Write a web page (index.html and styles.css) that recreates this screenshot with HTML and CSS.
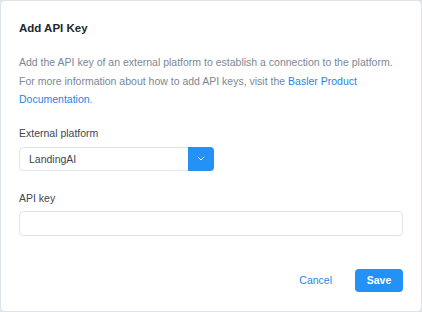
FILE: index.html
```html
<!DOCTYPE html>
<html>
<head>
<meta charset="utf-8">
<link rel="stylesheet" href="styles.css">
</head>
<body>
<div class="card">
  <h1 class="title">Add API Key</h1>
  <p class="desc">Add the API key of an external platform to establish a connection to the platform. For more information about how to add API keys, visit the <a class="link" href="#">Basler Product</a> <a class="link" href="#">Documentation</a>.</p>
  <label class="label">External platform</label>
  <div class="select">
    <span class="select-value">LandingAI</span>
    <span class="select-btn">
      <svg width="8" height="5" viewBox="0 0 8 5"><path d="M0.8 0.8 L4 4 L7.2 0.8" fill="none" stroke="#fff" stroke-width="1"/></svg>
    </span>
  </div>
  <label class="label label-key">API key</label>
  <div class="input"></div>
  <div class="footer">
    <span class="cancel">Cancel</span>
    <span class="save">Save</span>
  </div>
</div>
</body>
</html>
```
FILE: styles.css
```css
html, body {
  margin: 0;
  padding: 0;
}
body {
  background: #dfe4e8;
  padding: 1px 1px 1px 1px;
  height: 312px;
  box-sizing: border-box;
  font-family: "Liberation Sans", Arial, sans-serif;
}
.card {
  background: #fff;
  border-radius: 4px;
  height: 310px;
  box-sizing: border-box;
  padding: 19px 18px 0 18px;
  display: flex;
  flex-direction: column;
}
.title {
  margin: 0;
  font-size: 11.5px;
  line-height: 16px;
  font-weight: bold;
  color: #22272e;
}
.desc {
  margin: 17px 0 0 0;
  font-size: 10.5px;
  line-height: 18.5px;
  color: #7b8794;
}
.link {
  color: #1f83e8;
  text-decoration: none;
}
.label {
  display: block;
  margin-top: 16px;
  font-size: 10.5px;
  line-height: 16px;
  color: #3e4651;
}
.label-key {
  margin-top: 19px;
}
.select {
  margin-top: 6px;
  width: 195px;
  height: 24px;
  box-sizing: border-box;
  border: 1px solid #dfe5ec;
  border-radius: 4px;
  display: flex;
  align-items: stretch;
}
.select-value {
  flex: 1;
  padding-left: 9px;
  font-size: 10.5px;
  line-height: 22px;
  color: #3e4651;
}
.select-btn {
  width: 26px;
  margin: -1px -1px -1px 0;
  background: #2491f7;
  border-radius: 0 4px 4px 0;
  display: flex;
  align-items: center;
  justify-content: center;
}
.input {
  margin-top: 5px;
  height: 25px;
  box-sizing: border-box;
  border: 1px solid #dfe5ec;
  border-radius: 4px;
  width: 384px;
}
.footer {
  margin-top: 33px;
  display: flex;
  justify-content: flex-end;
  align-items: center;
  gap: 23px;
  width: 384px;
}
.cancel {
  font-size: 10.5px;
  color: #1f83e8;
}
.save {
  width: 48px;
  height: 23px;
  background: #2491f7;
  border-radius: 4px;
  color: #fff;
  font-weight: bold;
  font-size: 10.5px;
  line-height: 23px;
  text-align: center;
}
```
